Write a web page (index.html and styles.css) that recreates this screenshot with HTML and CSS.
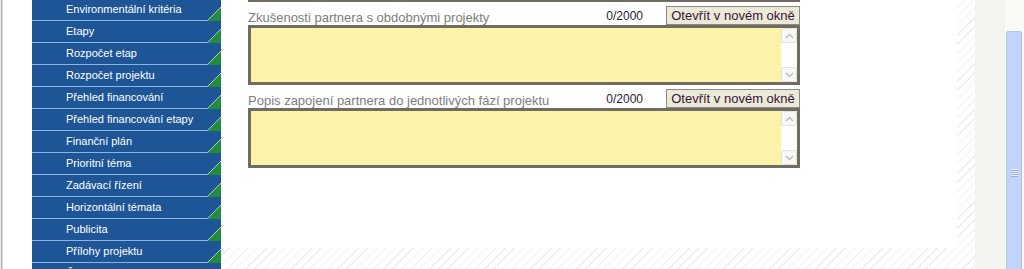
FILE: index.html
```html
<!DOCTYPE html>
<html lang="cs">
<head>
    <meta charset="UTF-8">
    <title>Partner projektu</title>
    <link rel="stylesheet" href="styles.css">
</head>
<body>
    <div class="screen">
        <div class="frame-edge"></div>

        <!-- Navigation -->
        <div class="side">
            <ul class="menu">
                <li class="menu-item">Environmentální kritéria</li>
                <li class="menu-item">Etapy</li>
                <li class="menu-item">Rozpočet etap</li>
                <li class="menu-item">Rozpočet projektu</li>
                <li class="menu-item">Přehled financování</li>
                <li class="menu-item">Přehled financování etapy</li>
                <li class="menu-item">Finanční plán</li>
                <li class="menu-item">Prioritní téma</li>
                <li class="menu-item">Zadávací řízení</li>
                <li class="menu-item">Horizontální témata</li>
                <li class="menu-item">Publicita</li>
                <li class="menu-item">Přílohy projektu</li>
                <li class="menu-item">Čestná prohlášení</li>
            </ul>
        </div>

        <!-- Form -->
        <div class="workspace">
            <div class="panel">
                <div class="fields">
                    <div class="field">
                        <div class="field-head"></div>
                        <div class="area">
                            <div class="area-scroll">
                                <div class="scroll-btn"><svg width="9" height="6" viewBox="0 0 9 6"><path d="M1 5 L4.5 1.5 L8 5" fill="none" stroke="#b9bdb6" stroke-width="1.4"/></svg></div>
                                <div class="scroll-btn"><svg width="9" height="6" viewBox="0 0 9 6"><path d="M1 1 L4.5 4.5 L8 1" fill="none" stroke="#b9bdb6" stroke-width="1.4"/></svg></div>
                            </div>
                        </div>
                    </div>

                    <div class="field">
                        <div class="field-head">
                            <span class="field-label">Zkušenosti partnera s obdobnými projekty</span>
                            <span class="counter">0/2000</span>
                            <button class="open-btn">Otevřít v novém okně</button>
                        </div>
                        <div class="area">
                            <div class="area-scroll">
                                <div class="scroll-btn"><svg width="9" height="6" viewBox="0 0 9 6"><path d="M1 5 L4.5 1.5 L8 5" fill="none" stroke="#b9bdb6" stroke-width="1.4"/></svg></div>
                                <div class="scroll-btn"><svg width="9" height="6" viewBox="0 0 9 6"><path d="M1 1 L4.5 4.5 L8 1" fill="none" stroke="#b9bdb6" stroke-width="1.4"/></svg></div>
                            </div>
                        </div>
                    </div>

                    <div class="field">
                        <div class="field-head">
                            <span class="field-label">Popis zapojení partnera do jednotlivých fází projektu</span>
                            <span class="counter">0/2000</span>
                            <button class="open-btn">Otevřít v novém okně</button>
                        </div>
                        <div class="area">
                            <div class="area-scroll">
                                <div class="scroll-btn"><svg width="9" height="6" viewBox="0 0 9 6"><path d="M1 5 L4.5 1.5 L8 5" fill="none" stroke="#b9bdb6" stroke-width="1.4"/></svg></div>
                                <div class="scroll-btn"><svg width="9" height="6" viewBox="0 0 9 6"><path d="M1 1 L4.5 4.5 L8 1" fill="none" stroke="#b9bdb6" stroke-width="1.4"/></svg></div>
                            </div>
                        </div>
                    </div>
                </div>
            </div>
        </div>

        <div class="gutter"></div>

        <!-- Window scrollbar -->
        <div class="scrollbar">
            <div class="scroll-thumb">
                <div class="grip"></div>
            </div>
        </div>
    </div>
</body>
</html>
```

FILE: styles.css
```css
* {
    box-sizing: border-box;
}

body {
    margin: 0;
    font-family: "Liberation Sans", Arial, sans-serif;
    background-color: #fff;
    overflow: hidden;
}

.screen {
    display: flex;
    height: 269px;
    overflow: hidden;
    background-color: #fff;
}

.frame-edge {
    width: 3px;
    background: linear-gradient(to right, #ececec 0 1px, #b4b4b0 1px 2px, #dcdcd8 2px 3px);
}

/* Navigation */
.side {
    width: 218px;
    padding-left: 29px;
}

.menu {
    list-style: none;
    margin: -1px 0 0;
    padding: 0;
    background-color: #1d5596;
}

.menu-item {
    position: relative;
    height: 22px;
    line-height: 21px;
    padding-left: 34px;
    border-bottom: 1px solid #8db4e3;
    color: #fff;
    font-size: 11px;
    white-space: nowrap;
}

.menu-item::after {
    content: "";
    position: absolute;
    right: 0;
    bottom: -1px;
    width: 14px;
    height: 14px;
    background: linear-gradient(to bottom right,
        transparent calc(50% - 0.6px),
        #a6cdb2 calc(50% - 0.6px),
        #a6cdb2 calc(50% + 0.6px),
        #218c3f calc(50% + 0.6px));
}

/* Form */
.workspace {
    width: 754px;
    height: 269px;
    padding: 0 18px 21px 0;
    background: repeating-linear-gradient(135deg, #fff 0 5.5px, #ededed 5.5px 6.5px);
}

.panel {
    height: 248px;
    padding-left: 27px;
    background-color: #fff;
    overflow: hidden;
}

.fields {
    width: 552px;
    margin-top: -77px;
}

.field {
    margin-bottom: 4px;
}

.field-head {
    display: flex;
    align-items: center;
    height: 19px;
}

.field-label {
    flex: 1;
    padding-top: 3px;
    color: #7d7d7d;
    font-size: 13px;
    white-space: nowrap;
}

.counter {
    margin-right: 23px;
    color: #2e1a2e;
    font-size: 12px;
}

.open-btn {
    width: 134px;
    height: 19px;
    padding: 0;
    border: 1px solid #8b8b83;
    background-color: #ece9d8;
    color: #361436;
    font-family: "Liberation Sans", Arial, sans-serif;
    font-size: 13px;
    line-height: 17px;
}

.area {
    display: flex;
    justify-content: flex-end;
    height: 60px;
    border: 3px solid #716c61;
    background-color: #faf3a8;
}

.area-scroll {
    display: flex;
    flex-direction: column;
    justify-content: space-between;
    width: 16px;
    background-color: #fdfdfb;
}

.scroll-btn {
    display: flex;
    align-items: center;
    justify-content: center;
    height: 15px;
    border: 1px solid #e2e3dd;
    border-radius: 2px;
    background-color: #f7f7f4;
}

.gutter {
    width: 30px;
    background-color: #f3f3ef;
}

/* Window scrollbar */
.scrollbar {
    width: 19px;
    padding: 31px 2px 0 1px;
    background-color: #fbfbf6;
}

.scroll-thumb {
    height: 300px;
    padding-top: 137px;
    border: 1px solid #aec3f2;
    border-radius: 2px;
    background-color: #c2d4fb;
}

.grip {
    width: 7px;
    height: 8px;
    margin: 0 auto;
    background: repeating-linear-gradient(to bottom, #eef3ff 0 1px, #94ade6 1px 2px);
}
```
